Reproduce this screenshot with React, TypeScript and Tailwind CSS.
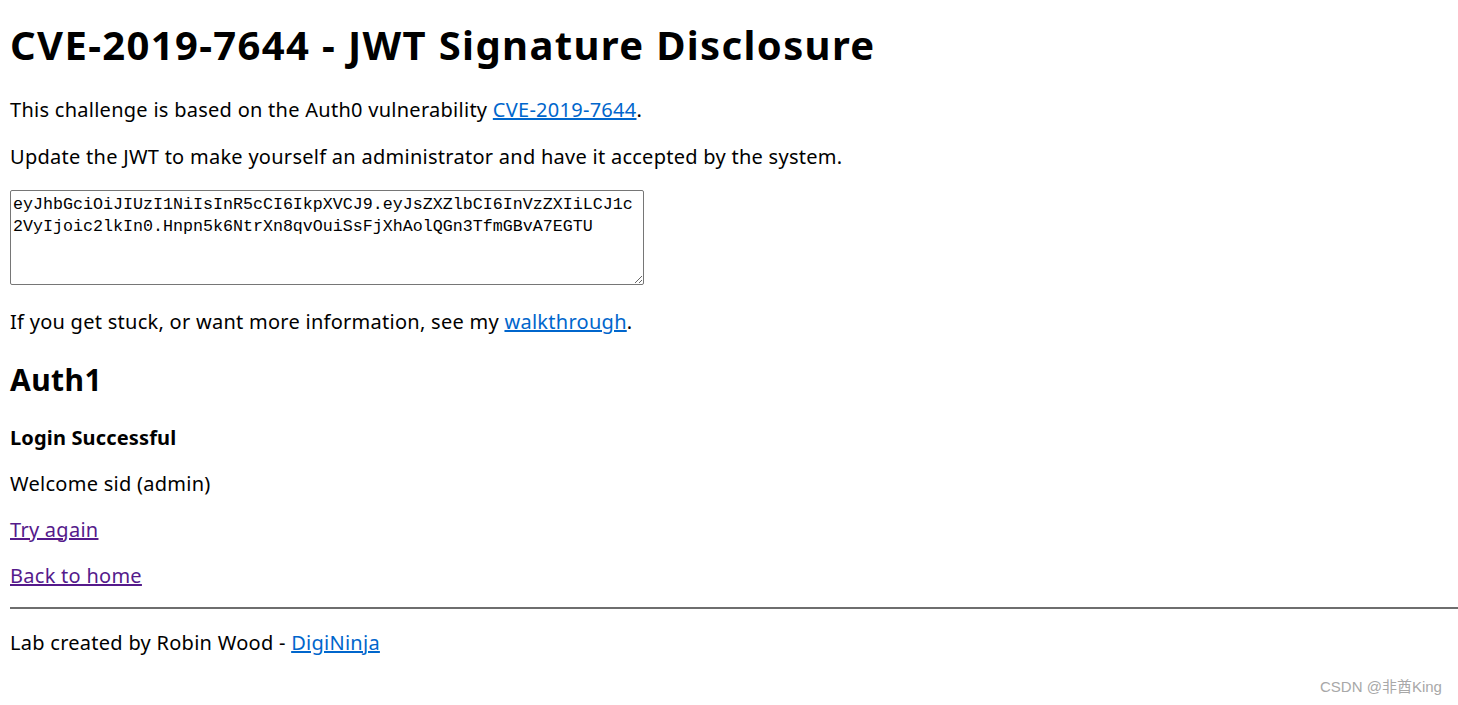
import React from "react";

export default function App() {
  const body = { fontFamily: '"Noto Sans", "Noto Sans CJK SC", sans-serif' };
  return (
    <div className="relative min-h-[705px] w-[1458px] overflow-hidden bg-white text-black" style={body}>
      <div className="flex flex-col pl-[10px]">
        <h1 className="mt-[19px] text-[40px] font-bold leading-[52px] tracking-[1.35px]">CVE-2019-7644 - JWT Signature Disclosure</h1>
        <p className="mt-[26px] text-[20px] leading-[26.5px] tracking-[0.27px]">
          This challenge is based on the Auth0 vulnerability{" "}
          <a href="#" className="text-[#0066cc] underline">CVE-2019-7644</a>.
        </p>
        <p className="mt-[20px] text-[20px] leading-[26.5px] tracking-[0.27px]">
          Update the JWT to make yourself an administrator and have it accepted by the system.
        </p>
        <div className="mt-[20px]">
          <textarea
            readOnly
            className="block h-[95px] w-[634px] resize rounded-[2px] border border-[#767676] px-[2px] py-[3px] text-[16.67px] leading-[22px] text-black outline-none"
            style={{ fontFamily: '"Liberation Mono", monospace' }}
            defaultValue="eyJhbGciOiJIUzI1NiIsInR5cCI6IkpXVCJ9.eyJsZXZlbCI6InVzZXIiLCJ1c2VyIjoic2lkIn0.Hnpn5k6NtrXn8qvOuiSsFjXhAolQGn3TfmGBvA7EGTU"
          />
        </div>
        <p className="mt-[24px] text-[20px] leading-[26.5px] tracking-[0.27px]">
          If you get stuck, or want more information, see my{" "}
          <a href="#" className="text-[#0066cc] underline">walkthrough</a>.
        </p>
        <h2 className="mt-[24px] text-[30px] font-bold leading-[40px] tracking-[0.4px]">Auth1</h2>
        <h4 className="mt-[25px] text-[20px] font-bold leading-[26.5px] tracking-[0.15px]">Login Successful</h4>
        <p className="mt-[19.5px] text-[20px] leading-[26.5px] tracking-[0.27px]">Welcome sid (admin)</p>
        <p className="mt-[19.5px] text-[20px] leading-[26.5px] tracking-[0.27px]">
          <a href="#" className="text-[#551a8b] underline">Try again</a>
        </p>
        <p className="mt-[19.5px] text-[20px] leading-[26.5px] tracking-[0.27px]">
          <a href="#" className="text-[#551a8b] underline">Back to home</a>
        </p>
        <hr className="mt-[18px] h-0 border-t-[2px] border-[#6e6e6e]" />
        <p className="mt-[21px] text-[20px] leading-[26.5px] tracking-[0.27px]">
          Lab created by Robin Wood -{" "}
          <a href="#" className="text-[#0066cc] underline">DigiNinja</a>
        </p>
      </div>
      <div className="absolute left-[1320px] top-[678px] text-[15px] leading-[18px] text-[#a8a8a8]" style={{ fontFamily: '"Liberation Sans", "Noto Sans CJK SC", sans-serif' }}>
        CSDN @非酋King
      </div>
    </div>
  );
}
